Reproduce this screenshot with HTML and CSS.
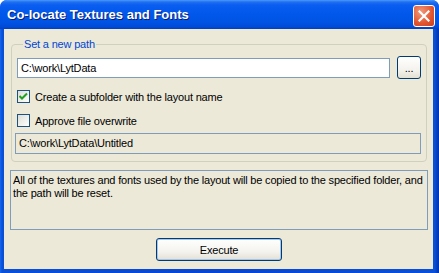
FILE: index.html
```html
<!DOCTYPE html>
<html lang="en">
<head>
  <meta charset="UTF-8" />
  <title>Co-locate Textures and Fonts</title>
  <link rel="stylesheet" href="styles.css">
</head>
<body>

  <div class="window">
    <div class="titlebar">
      <span class="title">Co-locate Textures and Fonts</span>
      <button class="close" aria-label="Close">
        <svg width="12" height="12" viewBox="0 0 12 12">
          <path d="M1.5 1.5 L10.5 10.5 M10.5 1.5 L1.5 10.5" stroke="#fff" stroke-width="2.2" stroke-linecap="square"/>
        </svg>
      </button>
    </div>

    <div class="content">
      <fieldset class="group">
        <legend>Set a new path</legend>
        <div class="path-row">
          <input type="text" class="path-input" value="C:\work\LytData" />
          <button class="btn browse">...</button>
        </div>
        <label class="check">
          <span class="box checked">
            <svg width="9" height="9" viewBox="0 0 9 9">
              <path d="M0.5 4 L3 6.5 L8 1.5" fill="none" stroke="#21a121" stroke-width="2"/>
            </svg>
          </span>
          Create a subfolder with the layout name
        </label>
        <label class="check">
          <span class="box"></span>
          Approve file overwrite
        </label>
        <div class="readonly">C:\work\LytData\Untitled</div>
      </fieldset>

      <div class="description">All of the textures and fonts used by the layout will be copied to the specified folder, and the path will be reset.</div>

      <div class="actions">
        <button class="btn execute">Execute</button>
      </div>
    </div>
  </div>

</body>
</html>
```

FILE: styles.css
```css
body {
  margin: 0;
  font-family: "Liberation Sans", Arial, sans-serif;
  font-size: 11px;
  letter-spacing: -0.18px;
  color: #000;
  background: #fff;
}
.window {
  width: 439px;
  height: 273px;
  display: flex;
  flex-direction: column;
  background: linear-gradient(90deg, #166aee 0, #0a4fd8 2px, #0845d0 50%, #0a4fd8 99%, #0033a8 100%);
  border-radius: 7px 7px 0 0;
  overflow: hidden;
}
.titlebar {
  height: 29px;
  flex: none;
  display: flex;
  align-items: center;
  justify-content: space-between;
  padding: 0 4px 0 7px;
  background: linear-gradient(#4a9af9 0, #1f70f2 2px, #0a5df0 5px, #0058ea 14px, #0054e4 22px, #004ad6 27px, #0040c0 29px);
}
.title {
  color: #fff;
  font-family: "Liberation Sans", Arial, sans-serif;
  font-weight: bold;
  font-size: 13px;
  letter-spacing: 0;
  text-shadow: 1px 1px 0 #0a1e78;
}
.close {
  width: 22px;
  height: 22px;
  margin-top: 3px;
  padding: 0;
  border: 1px solid #fff;
  border-radius: 3px;
  background: radial-gradient(circle at 35% 30%, #f09a7a, #e2542e 60%, #c8401c);
  display: flex;
  align-items: center;
  justify-content: center;
}
.content {
  flex: 1;
  margin: 0 6px 4px 4px;
  background: #ece9d8;
  padding: 9px 5px 0 6px;
  display: flex;
  flex-direction: column;
}
.group {
  margin: 0 1px 0 1px;
  padding: 0 5px 7px 5px;
  border: 1px solid #d0d0bf;
  border-radius: 4px;
}
.group legend {
  color: #0046d5;
  padding: 0 1px;
  margin-left: 6px;
}
.path-row {
  display: flex;
  align-items: center;
  gap: 7px;
  margin-top: 6px;
}
.path-input {
  width: 373px;
  height: 20px;
  box-sizing: border-box;
  border: 1px solid #7f9db9;
  padding: 0 3px;
  font: inherit;
  letter-spacing: inherit;
  background: #fff;
}
.btn {
  font: inherit;
  letter-spacing: inherit;
  color: #000;
  border: 1px solid #003c74;
  border-radius: 3px;
  background: linear-gradient(#fff, #f4f3ee 60%, #e3e0d3);
  padding: 0;
}
.browse {
  width: 24px;
  height: 23px;
  line-height: 18px;
}
.check {
  display: flex;
  align-items: center;
  gap: 5px;
  height: 13px;
  margin-top: 11px;
}
.check + .check {
  margin-top: 11px;
}
.box {
  width: 11px;
  height: 11px;
  border: 1px solid #1c5180;
  background: linear-gradient(135deg, #dcdcd7, #fff);
  display: flex;
  align-items: center;
  justify-content: center;
}
.readonly {
  margin: 6px 0 0 -2px;
  height: 21px;
  box-sizing: border-box;
  border: 1px solid #7f9db9;
  padding: 3px 3px 0 3px;
}
.description {
  margin-top: 8px;
  height: 60px;
  box-sizing: border-box;
  border: 1px solid #7f9db9;
  padding: 3px 2px;
  line-height: 13px;
}
.actions {
  display: flex;
  justify-content: center;
  margin-top: 8px;
}
.execute {
  width: 126px;
  height: 23px;
  border-color: #003c74;
  box-shadow: inset 0 0 0 1px #a8c4ed;
}
```
